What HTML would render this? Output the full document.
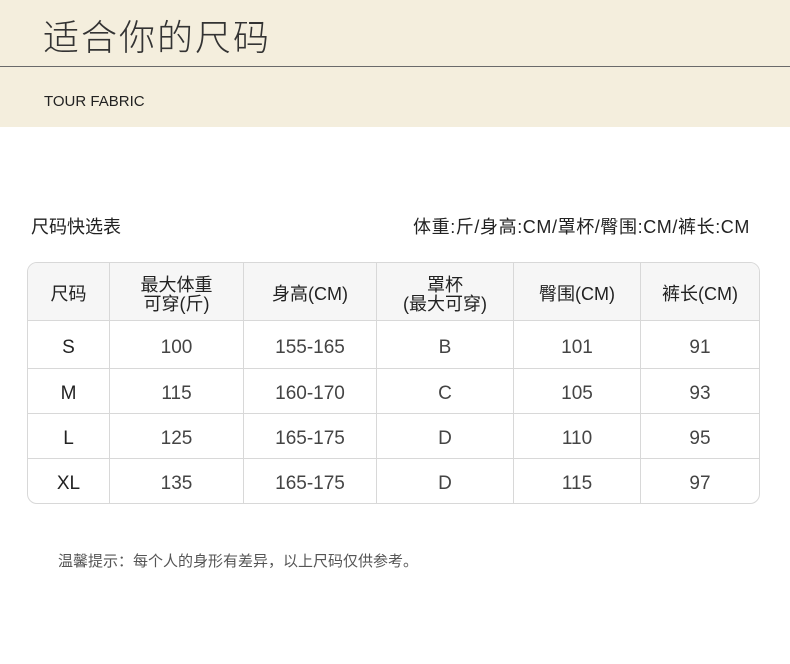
<!DOCTYPE html><html><head><meta charset="utf-8"><style>
body{margin:0;width:790px;height:664px;background:#fff;font-family:"Liberation Sans","Noto Sans CJK SC",sans-serif;position:relative;overflow:hidden;color:#222}
.band{position:absolute;left:0;top:0;width:790px;height:127px;background:#f4eedd}
.t{position:absolute;left:43px;top:9px;font-size:36px;font-weight:300;color:#333;letter-spacing:2px}
.line{position:absolute;left:0;top:66px;width:790px;height:1px;background:#6a6a6a}
.sub{position:absolute;left:44px;top:93px;font-size:15px;color:#222}
.l{position:absolute;left:31px;top:213px;font-size:18px;color:#222}
.r{position:absolute;right:40px;top:213px;font-size:18px;color:#222;letter-spacing:0.6px}
table{position:absolute;left:27px;top:262px;width:733px;border-collapse:separate;border-spacing:0;border:1px solid #d8d8d8;border-radius:10px;overflow:hidden}
td{border-right:1px solid #d8d8d8;border-bottom:1px solid #d8d8d8;text-align:center;font-size:19px;color:#444;padding:6px 0 0;font-weight:300}
td:last-child{border-right:none}
tr:last-child td{border-bottom:none}
tr.h td{background:#f6f6f6;height:51px;font-size:18px;line-height:19px;color:#222;font-weight:400}
.note{position:absolute;left:58px;top:550px;font-size:15px;color:#555}
</style></head><body>
<div class="band"><div class="t">适合你的尺码</div><div class="line"></div><div class="sub">TOUR FABRIC</div></div>
<div class="l">尺码快选表</div><div class="r">体重:斤/身高:CM/罩杯/臀围:CM/裤长:CM</div>
<table>
<tr class="h"><td style="width:81px">尺码</td><td style="width:133px">最大体重<br>可穿(斤)</td><td style="width:132px">身高(CM)</td><td style="width:136px">罩杯<br>(最大可穿)</td><td style="width:126px">臀围(CM)</td><td>裤长(CM)</td></tr>
<tr style="height:48px"><td style="color:#222;font-weight:400">S</td><td>100</td><td>155-165</td><td>B</td><td>101</td><td>91</td></tr>
<tr style="height:45px"><td style="color:#222;font-weight:400">M</td><td>115</td><td>160-170</td><td>C</td><td>105</td><td>93</td></tr>
<tr style="height:45px"><td style="color:#222;font-weight:400">L</td><td>125</td><td>165-175</td><td>D</td><td>110</td><td>95</td></tr>
<tr style="height:44px"><td style="color:#222;font-weight:400">XL</td><td>135</td><td>165-175</td><td>D</td><td>115</td><td>97</td></tr>
</table>
<div class="note">温馨提示：每个人的身形有差异，以上尺码仅供参考。</div>
</body></html>
